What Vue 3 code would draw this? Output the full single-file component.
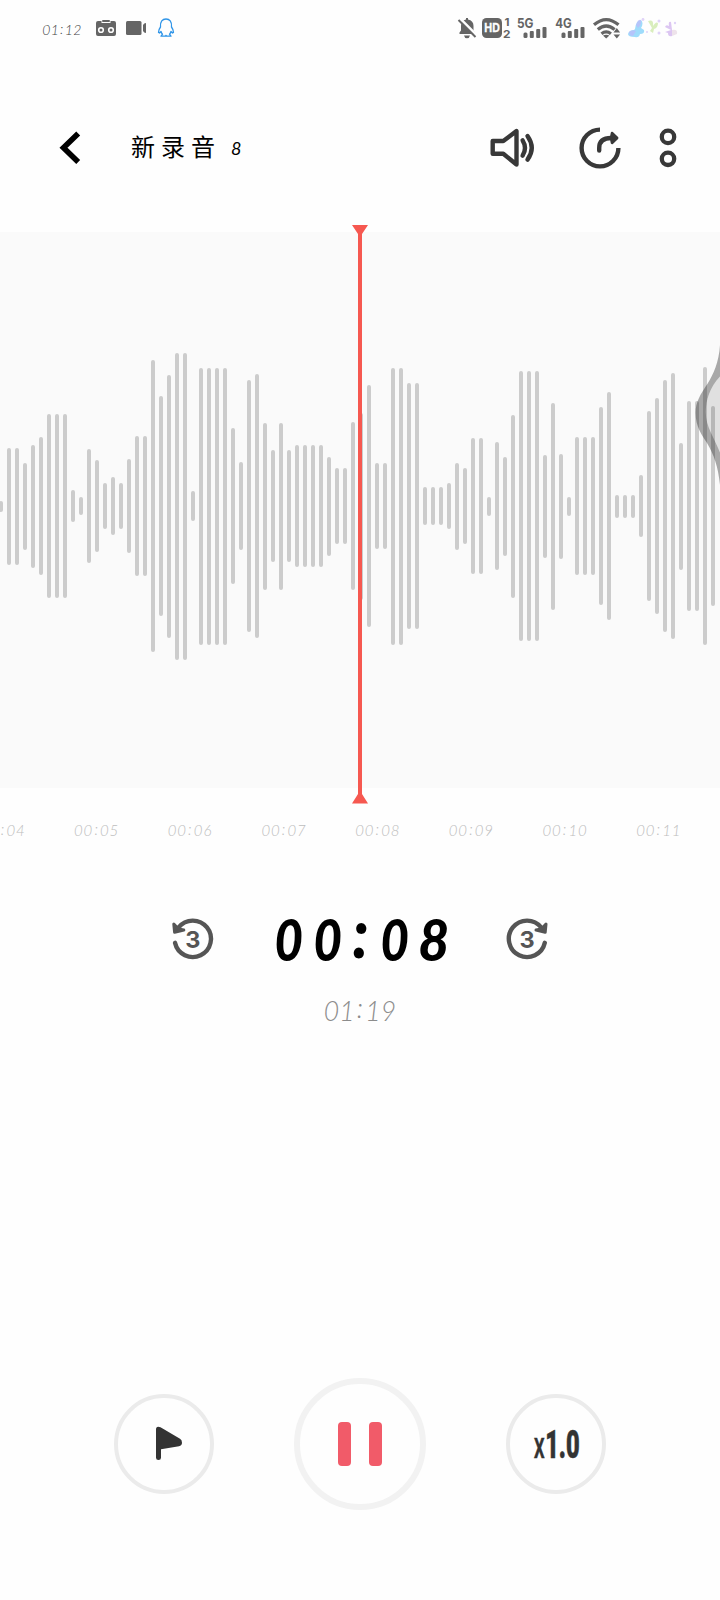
<script setup>
// Bar heights in thirds of a pixel, written as [height, repeat]
const runs = [
  [32, 1], [352, 2], [260, 1], [368, 1], [415, 1], [552, 3], [96, 1], [53, 1], [341, 1], [276, 1],
  [137, 1], [174, 1], [137, 1], [281, 1], [420, 2], [876, 1], [660, 1], [788, 1], [920, 2], [90, 1],
  [832, 4], [468, 1], [264, 1], [756, 1], [793, 1], [500, 1], [336, 1], [500, 1], [336, 1], [366, 4],
  [296, 1], [228, 2], [504, 1], [560, 1], [725, 1], [257, 2], [832, 2], [738, 2], [114, 3], [137, 1],
  [260, 1], [228, 1], [408, 2], [56, 1], [384, 1], [296, 1], [548, 1], [810, 3], [308, 1], [620, 1],
  [316, 1], [56, 1], [413, 3], [594, 1], [684, 1], [68, 3], [186, 1], [570, 1], [648, 1], [757, 1],
  [798, 1], [380, 1], [630, 2], [834, 1], [600, 1],
]
const bars = runs.flatMap(([h, n]) => Array(n).fill(h / 3))
const ticks = ['00:04', '00:05', '00:06', '00:07', '00:08', '00:09', '00:10', '00:11']
</script>

<template>
  <div class="screen">
    <div class="status">
      <div class="clock clock-status"><span v-for="(c, i) in '01:12'" :key="i" :class="{ colon: c === ':' }">{{ c }}</span></div>
      <svg class="cassette" width="20" height="60" viewBox="96 0 20 60">
        <path fill="#656565" d="M98 21h3.500v2h9v-2h3.500q2 0 2 2v11q0 2-2 2h-16q-2 0-2-2v-11q0-2 2-2z" />
        <path d="M103 21h6" stroke="#656565" stroke-width="2" stroke-linecap="round" />
        <g fill="#656565" stroke="#fefefe" stroke-width="1.600"><circle cx="101" cy="30" r="2.300" /><circle cx="111" cy="30" r="2.300" /></g>
      </svg>
      <svg class="video" width="21" height="60" viewBox="126 0 21 60" fill="#656565">
        <rect x="126" y="21" width="15.500" height="14" rx="1.500" /><path d="M143 25q1-2 3-2v10q-2 0-3-2z" />
      </svg>
      <svg class="penguin" width="18" height="60" viewBox="157 0 18 60" fill="none" stroke="#2f95e8" stroke-width="1.300" stroke-linejoin="round">
        <path d="M160.500 27C160 21.500 162.500 19 166 19s6 2.500 5.500 8c1.500 2 2 3.500 2 5.500l-1 .5-1.500-1.500c-.3 1.500-.8 2-1.500 2.700l1.500 2h-4.500l-.5-.8-.5.8H161l1.500-2c-.7-.7-1.200-1.200-1.500-2.700l-1.500 1.500-1-.5c0-2 .5-3.500 2-5.500z" />
      </svg>
      <span class="spacer"></span>
      <svg width="52" height="60" viewBox="458 0 52 60" fill="#656565">
        <path d="M459.500 34v-1.500l1.500-2v-4.500q0-5.500 5-6.500v-1.500h2v1.500q5.500 1 5.500 6.500v4.500l1.500 2v1.500zM464 35.500h6q-.5 2.700-3 2.700t-3-2.700z" />
        <path d="M460 18.500l17 17" stroke="#fefefe" stroke-width="2.500" /><path d="M458.500 20l17 17" stroke="#656565" stroke-width="2" />
        <rect x="482" y="18" width="20" height="20" rx="4.500" />
        <text x="484.300" y="32.300" class="sig" font-size="11.500" fill="#fefefe" stroke="#fefefe" stroke-width=".3" textLength="15.500" lengthAdjust="spacingAndGlyphs">HD</text>
        <text x="504.500" y="26" class="sig" font-size="11" textLength="5" lengthAdjust="spacingAndGlyphs">1</text>
        <text x="503" y="37.500" class="sig" font-size="11" textLength="7.500" lengthAdjust="spacingAndGlyphs">2</text>
      </svg>
      <svg class="net" width="31" height="60" viewBox="517.500 0 31 60" fill="#656565">
        <text x="517.500" y="27.800" class="sig" font-size="13.500" textLength="16.500" lengthAdjust="spacingAndGlyphs">5G</text>
        <rect x="524" y="32.500" width="4" height="5.500" rx="1.500" /><rect x="530.300" y="31" width="4" height="7" rx="1" /><rect x="536.700" y="29" width="4" height="9" rx="1" /><rect x="543" y="27" width="4" height="11" rx="1" />
      </svg>
      <svg class="net" width="31" height="60" viewBox="555.500 0 31 60" fill="#656565">
        <text x="555.800" y="27.800" class="sig" font-size="13.500" textLength="16.500" lengthAdjust="spacingAndGlyphs">4G</text>
        <rect x="562" y="32.500" width="4" height="5.500" rx="1.500" /><rect x="568.300" y="31" width="4" height="7" rx="1" /><rect x="574.700" y="29" width="4" height="9" rx="1" /><rect x="581" y="27" width="4" height="11" rx="1" />
      </svg>
      <svg class="wifi" width="28" height="60" viewBox="593 0 28 60" fill="none" stroke="#656565" stroke-width="3.200">
        <path d="M594 24.800q12.200-10.500 24.500 0M597.800 29.500q8.400-7 16.800 0M601.500 33.800q4.700-3.800 9.400 0" />
        <path d="M603 35.500q3.200-1.500 6.400 0L606.200 38.500z" fill="#656565" stroke="none" />
        <path d="M613.500 32.500l3.300-4.500 3.300 4.500zM613.500 34.500h6.600l-3.300 4z" fill="#656565" stroke="none" />
      </svg>
      <svg class="butterflies" width="51" height="60" viewBox="627 0 51 60">
        <path fill="#9fdcfb" d="M635 29q1-9 6-9 3 3 0 8l3 2q1 4-4 4-1 4-5 3-7 0-7-3 1-4 6-4z" />
        <path fill="#c5b4fa" d="M636 25q2-6 5-5 1 4-3 8zM629 32q3-3 7-1l-3 5q-4 0-4-4z" opacity=".6" />
        <path fill="#d9eebd" d="M652 28l-4-7q6-2 5 5 3-5 5-3 0 5-4 6l-1 4-3-2z" />
        <path fill="#dcc6f2" d="M671 30l-6-3q1-3 4-1-1-5 2-4l1 8v6q-4 1-4-3l-3-1z" />
        <path fill="#eee3eb" d="M672 30q6-1 5 4l-5 2z" />
        <g fill="#e0d3f8"><circle cx="643" cy="19.500" r="1.400" /><circle cx="659" cy="21" r="1.500" /><circle cx="659" cy="33" r="1.500" /><circle cx="675" cy="23" r="1.200" /><circle cx="647" cy="32" r="1" /></g>
      </svg>
    </div>

    <header class="header">
      <svg width="21" height="80" viewBox="59 108 21 80" fill="none" stroke="#000" stroke-width="5.600">
        <path d="M78.200 133.500L63.500 147.800l14.700 14.200" />
      </svg>
      <h1 class="title">新录音<span class="num">8</span></h1>
      <span class="spacer"></span>
      <svg width="45" height="80" viewBox="490 108 45 80" fill="none" stroke="#383838" stroke-width="4.400" stroke-linejoin="round" stroke-linecap="round">
        <path d="M492.700 141h10.600L516.500 131v33.500L503.300 153.800h-10.600z" />
        <path d="M522.600 140.300q4.800 7.700 0 15.300M527.500 136q8.500 12 0 23.600" />
      </svg>
      <svg class="share" width="42" height="80" viewBox="579 108 42 80" fill="none" stroke="#383838" stroke-width="4.400">
        <path d="M600 129.600a18.400 18.400 0 1 0 18.400 18.400" />
        <path d="M599.200 150.500v-2.500c0-7 4-10 12-10" stroke-linecap="round" />
        <path d="M612 133l5.200 5-5.200 5-1-5z" fill="#383838" stroke-width="2.500" stroke-linejoin="round" />
      </svg>
      <svg class="more" width="18" height="80" viewBox="659 108 18 80" fill="none" stroke="#383838" stroke-width="4.300">
        <circle cx="668" cy="136.900" r="6.200" /><circle cx="668" cy="158.800" r="6.200" />
      </svg>
    </header>

    <section class="wave">
      <div class="bars"><i v-for="(h, i) in bars" :key="i" :style="{ height: h + 'px' }"></i></div>
      <svg class="playhead" width="18" height="580" viewBox="0 0 18 580" fill="#f65850">
        <path d="M1 1h16l-6 9v560l6 9.500H1l6-9.500V10z" />
      </svg>
      <svg class="edge" width="26" height="142" viewBox="694 344 26 142">
        <path fill="#000" fill-opacity=".325" d="M720 345C719 362 713 375 708 383C700 395 695.600 402 695.600 413C695.600 427 702 435 707 443C714 455 718 466 720 485V452.500C714 437 705.800 427 705.800 412C705.800 400 710 387 720 376.500z" />
        <path fill="#000" fill-opacity=".1" d="M720 376.500C710 387 705.800 400 705.800 412C705.800 427 714 437 720 452.500z" />
      </svg>
    </section>

    <div class="ticks">
      <div v-for="t in ticks" :key="t" class="clock clock-tick"><span v-for="(c, i) in t" :key="i" :class="{ colon: c === ':' }">{{ c }}</span></div>
    </div>

    <div class="position">
      <svg width="44" height="60" viewBox="171 909 44 60">
        <path d="M175 942.800A18.200 18.200 0 1 0 178.500 927.500" fill="none" stroke="#555" stroke-width="4.400" stroke-linecap="round" />
        <path d="M173.800 924l.8 8.300 9.200-2.300-5.300-1z" fill="#555" stroke="#555" stroke-width="3" stroke-linejoin="round" />
        <text x="192.800" y="947.600" class="three" text-anchor="middle">3</text>
      </svg>
      <div class="clock clock-main"><span v-for="(c, i) in '00:08'" :key="i" :class="{ colon: c === ':' }">{{ c }}</span></div>
      <svg width="44" height="60" viewBox="505 909 44 60">
        <path d="M544.800 942.800A18.200 18.200 0 1 1 541.300 927.500" fill="none" stroke="#555" stroke-width="4.400" stroke-linecap="round" />
        <path d="M546 924l-.8 8.300-9.200-2.300 5.300-1z" fill="#555" stroke="#555" stroke-width="3" stroke-linejoin="round" />
        <text x="527" y="947.600" class="three" text-anchor="middle">3</text>
      </svg>
    </div>
    <div class="clock clock-total"><span v-for="(c, i) in '01:19'" :key="i" :class="{ colon: c === ':' }">{{ c }}</span></div>

    <footer class="controls">
      <button class="round">
        <svg width="30" height="38" viewBox="149 1425 30 38" fill="#333">
          <path d="M156 1429.500q0-4 4.500-2.300l19.500 11.600q2 1.200 2 4t-3 3.500l-18 3v8.500q0 2.200-2.500 2.200t-2.500-2.200z" />
        </svg>
      </button>
      <button class="round pause"><i></i><i></i></button>
      <button class="round">
        <svg width="50" height="46" viewBox="531 1421 50 46" fill="#333" stroke="#333">
          <text x="533.800" y="1457.800" class="rate" font-size="36" font-weight="500" stroke-width=".4" textLength="11" lengthAdjust="spacingAndGlyphs">x</text>
          <text x="545.200" y="1457.800" class="rate" font-size="39" font-weight="900" stroke-width=".6" textLength="34.500" lengthAdjust="spacingAndGlyphs">1.0</text>
        </svg>
      </button>
    </footer>
  </div>
</template>

<style>
body { background: #fefefe; }
</style>

<style scoped>
.screen { width: 720px; height: 1600px; display: flex; flex-direction: column; background: #fefefe; overflow: hidden; font-family: Lato, "Noto Sans CJK SC", sans-serif; }
svg { display: block; flex: none; overflow: visible; }
.spacer { flex: 1; }
.status { height: 60px; display: flex; padding: 0 42px 0 42px; }
.sig { font-family: Inter, sans-serif; font-weight: 700; }
.cassette { margin-left: 12px; }
.video { margin-left: 10px; }
.penguin { margin-left: 10px; }
.net { margin-left: 7px; }
.wifi { margin-left: 7px; }
.butterflies { margin-left: 6px; }

.clock { display: flex; font-style: italic; font-weight: 300; }
.clock span { text-align: center; flex: none; }
.clock .colon { position: relative; }
.clock-status { width: 42px; padding-top: 20px; font-size: 14px; line-height: 20px; color: #444; }
.clock-status span { width: 8.500px; }
.clock-status .colon { width: 5.500px; top: -1px; }

.header { height: 80px; margin-top: 48px; padding: 0 43px 0 59px; display: flex; align-items: center; }
.title { margin: 0 0 0 51px; font-size: 24px; line-height: 40px; font-weight: 400; letter-spacing: 6px; color: #000; }
.num { font-size: 18px; font-style: italic; margin-left: 10px; letter-spacing: 0; position: relative; top: -1px; }
.share { margin-left: 44px; }
.more { margin-left: 38px; }

.wave { position: relative; height: 555.700px; margin-top: 44px; background: #fafafa; }
.bars { display: flex; align-items: center; gap: 4px; height: 548.600px; margin-left: -1.200px; }
.bars i { flex: none; width: 4px; border-radius: 2px; background: #ccc; }
.playhead { position: absolute; left: 351px; top: -8px; }
.edge { position: absolute; right: 0; top: 112px; }

.ticks { display: flex; margin: 30.300px 0 0 -20px; height: 24px; }
.clock-tick { flex: none; width: 93.700px; font-size: 15px; line-height: 24px; color: #bdbdbd; }
.clock-tick span { width: 9.500px; }
.clock-tick .colon { width: 7px; top: -1px; }

.position { display: flex; align-items: center; height: 60px; margin-top: 67px; padding: 0 171px; }
.clock-main { font-size: 57px; line-height: 60px; font-weight: 900; color: #000; margin: 1px 51.400px 0 54px; }
.clock-main span { width: 39.400px; transform: scaleX(.86); }
.clock-main span:last-child { transform: scaleX(.94); }
.clock-main .colon { width: 27px; top: -7px; transform: translateX(-1px) scale(1.1, 1.2); }
.clock-total { margin: 25px auto 0; font-size: 26.500px; line-height: 34px; color: #8c8c8c; }
.clock-total span { width: 15.500px; }
.clock-total .colon { width: 10.500px; top: -3px; }

.controls { display: flex; align-items: center; gap: 80px; margin: auto 114px 90px; }
.round { box-sizing: border-box; flex: none; width: 100px; height: 100px; padding: 0; border: 4px solid #ebebeb; border-radius: 50%; background: transparent; display: flex; align-items: center; justify-content: center; }
.pause { width: 132px; height: 132px; border: 6px solid #f2f2f2; gap: 18px; }
.pause i { width: 13px; height: 44px; border-radius: 4px; background: #f15b69; }
.three { font: 700 23.500px Inter, sans-serif; fill: #555; }
.rate { font-family: Roboto, sans-serif; }
</style>
